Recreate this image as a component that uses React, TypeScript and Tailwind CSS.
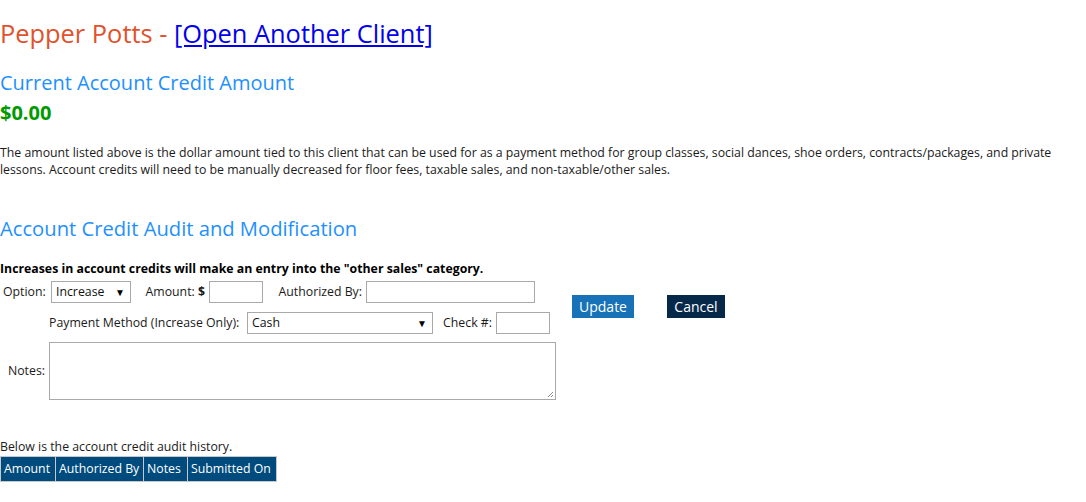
import React from "react";

function Select({ value, width }: { value: string; width: string }) {
  return (
    <div
      className={`${width} h-[22px] border border-[#a9a9a9] bg-white flex items-center justify-between pl-[4px] pr-[5px] text-[12.3px] text-[#111]`}
    >
      <span>{value}</span>
      <span className="text-[10px] leading-none text-black">▼</span>
    </div>
  );
}

function Input({ width }: { width: string }) {
  return <div className={`${width} h-[22px] border border-[#a9a9a9] bg-white`} />;
}

export default function App() {
  return (
    <div
      className="w-[1086px] h-[502px] bg-white overflow-hidden text-[#1a1a1a]"
      style={{ fontFamily: '"Open Sans", "Noto Sans", sans-serif' }}
    >
      <h1 className="mt-[18px] text-[25.4px] leading-[30px] text-[#e0522d] whitespace-nowrap">
        Pepper Potts -{" "}
        <a href="#" className="text-[#0000ee] underline">
          [Open Another Client]
        </a>
      </h1>
      <h2 className="mt-[23px] text-[20px] leading-[24px] text-[#1e90ff]">
        Current Account Credit Amount
      </h2>
      <div className="mt-[6px] text-[20px] leading-[24px] font-bold text-[#009a00]">$0.00</div>
      <p className="mt-[19px] text-[12.3px] leading-[17px]">
        The amount listed above is the dollar amount tied to this client that can be used for as a payment method for group
        classes, social dances, shoe orders, contracts/packages, and private lessons. Account credits will need to be manually
        decreased for floor fees, taxable sales, and non-taxable/other sales.
      </p>
      <h2 className="mt-[38px] text-[20.2px] leading-[24px] text-[#1e90ff]">
        Account Credit Audit and Modification
      </h2>
      <div className="mt-[20px] text-[12.3px] leading-[17px] font-bold text-black">
        Increases in account credits will make an entry into the "other sales" category.
      </div>

      <div className="flex items-center text-[12.3px]">
        <div className="w-[556px]">
          <div className="mt-[4px] flex items-center h-[22px]">
            <span className="w-[48px] pl-[3px] whitespace-nowrap">Option:</span>
            <div className="ml-[3px]">
              <Select value="Increase" width="w-[80px]" />
            </div>
            <span className="w-[78px] text-right pr-[4px] whitespace-nowrap">
              Amount: <b>$</b>
            </span>
            <Input width="w-[54px]" />
            <span className="w-[103px] text-right pr-[4px] whitespace-nowrap">Authorized By:</span>
            <Input width="w-[169px]" />
          </div>
          <div className="mt-[9px] flex items-center h-[22px] pl-[49px]">
            <span className="w-[198px] pr-[4px] whitespace-nowrap">Payment Method (Increase Only):</span>
            <Select value="Cash" width="w-[186px]" />
            <span className="w-[63px] text-right pr-[4px] whitespace-nowrap">Check #:</span>
            <Input width="w-[54px]" />
          </div>
        </div>
        <button className="ml-[16px] mt-[2px] w-[62px] h-[23px] bg-[#1872b7] text-white text-[14px] leading-[23px]">
          Update
        </button>
        <button className="ml-[33px] mt-[2px] w-[58px] h-[23px] bg-[#06294a] text-white text-[14px] leading-[23px]">
          Cancel
        </button>
      </div>

      <div className="mt-[8px] flex items-center text-[12.3px]">
        <span className="w-[45px] text-right whitespace-nowrap">Notes:</span>
        <div className="ml-[4px] relative w-[507px] h-[58px] border border-[#a9a9a9] bg-white">
          <svg className="absolute right-[1px] bottom-[1px]" width="8" height="8" viewBox="0 0 8 8">
            <path d="M7 2 L2 7 M7 5 L5 7" stroke="#888" strokeWidth="1" />
          </svg>
        </div>
      </div>

      <div className="mt-[38px] text-[12.3px] leading-[17px]">Below is the account credit audit history.</div>
      <table className="mt-[1px] border-collapse text-[12.3px] text-white">
        <thead>
          <tr className="bg-[#004b7d] h-[25px]">
            <th className="w-[55px] border border-[#c8c8c8] font-normal px-[3px] text-left whitespace-nowrap">Amount</th>
            <th className="w-[88px] border border-[#c8c8c8] font-normal px-[3px] text-left whitespace-nowrap">Authorized By</th>
            <th className="w-[44px] border border-[#c8c8c8] font-normal px-[3px] text-left whitespace-nowrap">Notes</th>
            <th className="w-[89px] border border-[#c8c8c8] font-normal px-[3px] text-left whitespace-nowrap">Submitted On</th>
          </tr>
        </thead>
      </table>
    </div>
  );
}
